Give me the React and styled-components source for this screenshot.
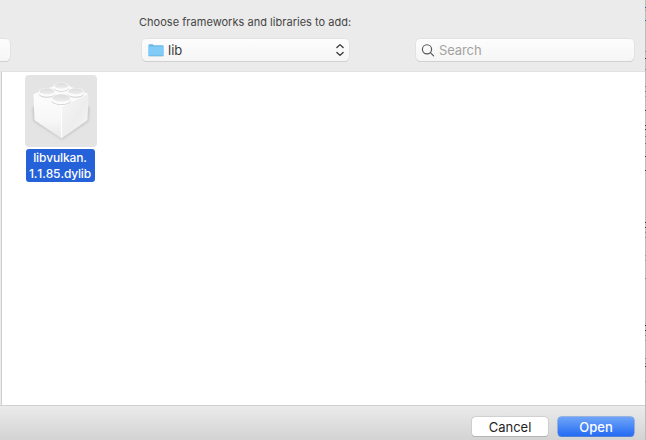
import React from "react";
import styled, { createGlobalStyle } from "styled-components";

const GlobalStyle = createGlobalStyle`
  * { box-sizing: border-box; }
  body { margin: 0; overflow: hidden; }
`;

const Window = styled.div`
  display: grid;
  grid-template-columns: 645px 1px;
  width: 646px;
  height: 440px;
  overflow: hidden;
  font-family: Inter, "Liberation Sans", sans-serif;
  font-size: 13px;
  color: #3a3a3a;
`;

const Dialog = styled.main`
  display: grid;
  grid-template-rows: 72px 333px 35px;
  min-width: 0;
`;

const Toolbar = styled.header`
  display: grid;
  grid-template-rows: 39px 22px;
  background: #ebebeb;
  border-bottom: 1px solid #e2e2e2;
`;

const Title = styled.div`
  padding: 15px 0 0 139px;
  font-size: 11px;
  line-height: 14px;
  letter-spacing: 0.03px;
  color: #454545;
  white-space: nowrap;
`;

const Controls = styled.div`
  display: flex;
`;

const Field = styled.div`
  display: flex;
  align-items: center;
  height: 22px;
  border-radius: 4.5px;
  background: linear-gradient(#fdfdfd, #f5f5f5);
  box-shadow: 0 0 0 0.5px #d9d9d9, 0 1px 0.5px #c8c8c8;
`;

const NavButton = styled(Field)`
  width: 10px;
  border-radius: 0 4.5px 4.5px 0;
`;

const LocationMenu = styled(Field)`
  width: 207px;
  margin-left: 132px;
  padding: 0 4px 0 6px;
`;

const Location = styled.span`
  flex: 1;
  padding-left: 4px;
  line-height: 22px;
`;

const SearchField = styled(Field)`
  width: 218px;
  margin-left: 67px;
  padding-left: 5px;
  gap: 4px;
  color: #a3a3a3;
  letter-spacing: -0.1px;
`;

const Files = styled.section`
  padding: 3px 0 0 23px;
  background: #fff;
  border-left: 1px solid #ececec;
  box-shadow: inset 1px 0 #cecece;
`;

const FileItem = styled.div`
  display: flex;
  flex-direction: column;
  align-items: center;
  width: 72px;
  margin-left: 1px;
`;

const Thumbnail = styled.div`
  width: 72px;
  height: 72px;
  border-radius: 4px;
  background: #e4e4e4;
`;

const FileName = styled.div`
  width: 69px;
  height: 33px;
  margin: 2px 2px 0 0;
  padding-top: 1px;
  border-radius: 3px;
  background: #2561d8;
  color: #fff;
  font-size: 12px;
  font-weight: 500;
  font-kerning: none;
  line-height: 16px;
  letter-spacing: -0.14px;
  text-align: center;
  white-space: nowrap;
`;

const Footer = styled.footer`
  display: flex;
  justify-content: flex-end;
  gap: 10px;
  padding: 11px 11px 0 0;
  border-top: 1px solid #d0d0d0;
  background: linear-gradient(#ebebeb, #d3d3d3);
`;

const Button = styled.button`
  width: 76px;
  height: 19px;
  padding: 0;
  border: 0;
  border-radius: 3.5px;
  background: ${({ $primary }) =>
    $primary ? "linear-gradient(#6fa5f8, #246bf3)" : "#fff"};
  box-shadow: ${({ $primary }) =>
    $primary
      ? "0 0 0 0.5px #4c82e2, 0 1px 0.5px #5281d0"
      : "0 0 0 0.5px #bdbdbd, 0 1px 0.5px #aaa"};
  color: ${({ $primary }) => ($primary ? "#fff" : "#1f1f1f")};
  font: ${({ $primary }) => ($primary ? 500 : 400)} 13px/20px Inter, sans-serif;
`;

const WindowEdge = styled.div`
  background: #bcbcbc;
`;

const EdgeSvg = styled.svg`
  display: block;
`;

const edgeMarks = [
  [7, "#245ac0"], [10, "#8c9bc4"], [20, "#2467c7"], [51, "#888"],
  [58, "#383838"], [69, "#888"], [86, "#888"], [91, "#777"],
  [96, "#999"], [110, "#444"], [125, "#444"], [129, "#444"],
  [136, "#777"], [143, "#777"], [156, "#444"], [170, "#444"],
  [222, "#444"], [227, "#444"], [232, "#888"], [237, "#999"],
  [255, "#999"], [260, "#999"], [278, "#888"], [325, "#333"],
  [330, "#333"], [335, "#888"], [340, "#999"], [358, "#888"],
  [363, "#777"], [366, "#333"], [381, "#999"],
];

function FolderIcon() {
  return (
    <svg width="16" height="22" viewBox="0 0 16 22">
      <path d="M.5 6q0-.8.8-.8h3.4l1.2 1.1h8.8q.8 0 .8.8v9.3q0 .6-.6.6H1.1q-.6 0-.6-.6z" fill="#68b9e8" />
      <path d="M.5 7.6h15v8.6q0 .6-.6.6H1.1q-.6 0-.6-.6z" fill="#80cbf7" />
      <path d="M.8 17h14.4" stroke="#6ba9cd" strokeWidth=".6" />
    </svg>
  );
}

function UpDownIcon() {
  return (
    <svg width="10" height="22" viewBox="0 0 10 22" fill="none" stroke="#333" strokeWidth="1.3" strokeLinecap="round" strokeLinejoin="round">
      <path d="M1.9 8.5 5 5.6l3.1 2.9M1.9 13.5 5 16.4l3.1-2.9" />
    </svg>
  );
}

function SearchIcon() {
  return (
    <svg width="14" height="22" viewBox="0 0 14 22" fill="none" stroke="#555" strokeWidth="1.15" strokeLinecap="round">
      <circle cx="6" cy="10.3" r="4.6" />
      <path d="m9.4 13.7 3.2 3.2" />
    </svg>
  );
}

const studs = [[36.3, 11.6, 7.5], [22, 17.3, 8], [50.6, 17.3, 8], [36.3, 24, 9.6]];

function BrickIcon() {
  return (
    <svg width="72" height="72" viewBox="0 0 72 72">
      <defs>
        <linearGradient id="leftFace" x1="0" y1="0" x2="0" y2="1">
          <stop stopColor="#fdfdfd" /><stop offset=".6" stopColor="#f7f7f7" /><stop offset="1" stopColor="#e8e8e8" />
        </linearGradient>
        <linearGradient id="rightFace" x1="0" y1="0" x2="1" y2="1">
          <stop stopColor="#f6f6f6" /><stop offset=".55" stopColor="#ededed" /><stop offset="1" stopColor="#f8f8f8" />
        </linearGradient>
        <linearGradient id="studTop" x1="0" y1="0" x2="0" y2="1">
          <stop stopColor="#dcdcdc" /><stop offset="1" stopColor="#eee" />
        </linearGradient>
        <filter id="softShadow" x="-30%" y="-30%" width="160%" height="160%">
          <feGaussianBlur stdDeviation="1.6" />
        </filter>
      </defs>
      <path d="M8 32h56l-1 14-26 18L9 46z" fill="#999" opacity=".55" filter="url(#softShadow)" />
      <path d="M8.5 19 34 9h5l24.5 10-27 14z" fill="#fbfbfb" />
      <path d="m8.5 19 28 13.7V63.5L10.5 46q-1-.8-1.1-2z" fill="url(#leftFace)" />
      <path d="M63.5 19 36.5 32.7V63.5L61.5 46q1-.8 1.1-2z" fill="url(#rightFace)" />
      <path d="M36.5 33v29.5" stroke="#fff" strokeWidth="1" />
      {studs.map(([x, y, r]) => (
        <g key={`${x}-${y}`} transform={`translate(${x} ${y})`}>
          <ellipse cy="1.9" rx={r} ry={r * 0.43} fill="#cfcfcf" />
          <ellipse cy="1.1" rx={r} ry={r * 0.43} fill="#fcfcfc" />
          <ellipse cy="-.8" rx={r} ry={r * 0.43} fill="#fff" />
          <ellipse cy="-.9" rx={r - 0.5} ry={r * 0.39} fill="url(#studTop)" />
        </g>
      ))}
    </svg>
  );
}

export default function App() {
  return (
    <>
      <GlobalStyle />
      <Window>
        <Dialog>
          <Toolbar>
            <Title>Choose frameworks and libraries to add:</Title>
            <Controls>
              <NavButton />
              <LocationMenu>
                <FolderIcon />
                <Location>lib</Location>
                <UpDownIcon />
              </LocationMenu>
              <SearchField><SearchIcon />Search</SearchField>
            </Controls>
          </Toolbar>
          <Files>
            <FileItem>
              <Thumbnail><BrickIcon /></Thumbnail>
              <FileName>libvulkan.<br />1.1.85.dylib</FileName>
            </FileItem>
          </Files>
          <Footer>
            <Button>Cancel</Button>
            <Button $primary>Open</Button>
          </Footer>
        </Dialog>
        <WindowEdge>
          <EdgeSvg width="1" height="440">
            {edgeMarks.map(([y, color]) => <rect key={y} y={y} width="1" height="1" fill={color} />)}
          </EdgeSvg>
        </WindowEdge>
      </Window>
    </>
  );
}
